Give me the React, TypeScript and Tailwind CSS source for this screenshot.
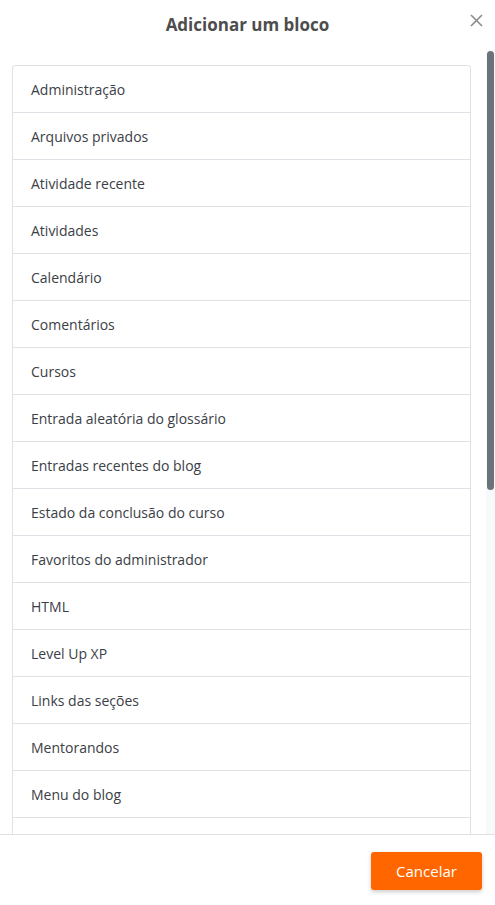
const blocks = [
  'Administração',
  'Arquivos privados',
  'Atividade recente',
  'Atividades',
  'Calendário',
  'Comentários',
  'Cursos',
  'Entrada aleatória do glossário',
  'Entradas recentes do blog',
  'Estado da conclusão do curso',
  'Favoritos do administrador',
  'HTML',
  'Level Up XP',
  'Links das seções',
  'Mentorandos',
  'Menu do blog',
  'Menu principal',
];

export default function App() {
  return (
    <div className="flex h-[905px] w-[495px] flex-col bg-white font-['Open_Sans',sans-serif]">
      {/* Header */}
      <div className="relative flex h-[49px] shrink-0 items-center justify-center">
        <h5 className="text-[17px] font-bold text-[#4d4d4d]">Adicionar um bloco</h5>
        <button className="absolute right-[12px] top-[13px] flex h-[14px] w-[14px] items-center justify-center text-[#8a8a8a]">
          <svg width="13" height="13" viewBox="0 0 13 13" fill="none" stroke="currentColor" strokeWidth="1.6">
            <path d="M1 1L12 12M12 1L1 12" />
          </svg>
        </button>
      </div>

      {/* Body */}
      <div className="flex min-h-0 flex-1">
        <div className="min-w-0 flex-1 overflow-hidden pl-[12px] pr-[15px] pt-4">
          <div className="rounded-[3px] border border-t-0 border-[#dee2e6]">
            {blocks.map((name, i) => (
              <div
                key={name}
                className={`flex h-[47px] items-center border-t border-[#dee2e6] px-[18px] text-[14px] text-[#3b4046] ${
                  i === 0 ? 'rounded-t-[3px]' : ''
                }`}
              >
                {name}
              </div>
            ))}
          </div>
        </div>
        <div className="w-[9px] shrink-0 bg-[#f8f9fa] pl-[1px]">
          <div className="mt-[2px] h-[439px] w-[7px] rounded-full bg-[#6a737b]" />
        </div>
      </div>

      {/* Footer */}
      <div className="flex h-[71px] shrink-0 items-start justify-end border-t border-[#dee2e6] pr-[13px] pt-[17px]">
        <button className="h-[38px] w-[111px] rounded-[3px] bg-[#ff6600] text-[15px] text-white shadow-[0_2px_4px_rgba(0,0,0,0.2)]">
          Cancelar
        </button>
      </div>
    </div>
  );
}
